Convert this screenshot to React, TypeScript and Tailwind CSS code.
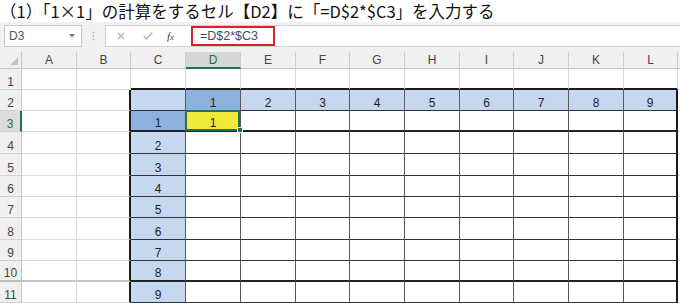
import React from "react";

const colW = [22, 55, 54, 55, 55, 55, 54, 55, 55, 54, 55, 55, 54, 2];
const letters = ["", "A", "B", "C", "D", "E", "F", "G", "H", "I", "J", "K", "L", ""];
const rowsN = [1, 2, 3, 4, 5, 6, 7, 8, 9, 10, 11];

function Cell({ r, c }: { r: number; c: number }) {
  // c: 0 row header, 1..12 A..L, 13 filler
  if (c === 0) {
    const sel = r === 3;
    const bottom = r === 10 ? "border-b-2 border-b-[#bdbdbd]" : "border-b border-b-[#d0d0d0]";
    return (
      <div
        className={`flex items-end justify-center pb-[1px] text-[12px] leading-none ${bottom} ${
          sel
            ? "bg-[#dcdcdc] border-r-2 border-r-[#217346] text-[#2a6a45]"
            : "bg-[#f0f0f0] border-r border-r-[#c6c6c6] text-[#444]"
        }`}
        style={{ fontFamily: "'Liberation Sans', Arial, sans-serif" }}
      >
        {r}
      </div>
    );
  }
  if (c === 13) {
    return <div className="bg-white border-b border-b-[#d9d9d9]" />;
  }
  const inTable = c >= 3 && c <= 12 && r >= 2;
  let right = "border-r border-r-[#dadada]";
  if (r >= 2 && (c === 2 || c === 12)) right = "border-r-2 border-r-[#1a1a1a]";
  else if (inTable) right = "border-r border-r-[#5a5a5a]";
  let bottom = "border-b border-b-[#dadada]";
  if (r === 1 && c >= 3) bottom = "border-b-2 border-b-[#1a1a1a]";
  else if (inTable && (r === 3 || r === 10)) bottom = "border-b-2 border-b-[#222]";
  else if (r === 10) bottom = "border-b-2 border-b-[#c4c4c4]";
  else if (inTable) bottom = "border-b border-b-[#333]";

  let bg = "bg-white";
  let text = "";
  if (inTable) {
    if (r === 2) {
      bg = c === 4 ? "bg-[#8eb0dc]" : "bg-[#c5d8f0]";
      if (c >= 4) text = String(c - 3);
    } else if (c === 3) {
      bg = r === 3 ? "bg-[#8eb0dc]" : "bg-[#c5d8f0]";
      text = String(r - 2);
    } else if (c === 4 && r === 3) {
      bg = "bg-[#efea3a]";
      text = "1";
    }
  }
  const isSel = c === 4 && r === 3;
  return (
    <div
      className={`relative flex items-end justify-center pb-[1px] text-[12px] leading-none text-[#1e1e1e] ${bg} ${right} ${bottom}`}
      style={{ fontFamily: "'Liberation Sans', Arial, sans-serif" }}
    >
      {text}
      {isSel && (
        <>
          <div className="absolute -left-[1px] -top-[1px] -right-[0px] -bottom-[1px] z-10 border-2 border-[#217346]" />
          <div className="absolute -right-[3px] -bottom-[3px] z-20 w-[6px] h-[6px] bg-[#217346] border border-white" />
        </>
      )}
    </div>
  );
}

export default function App() {
  return (
    <div className="w-[680px] h-[303px] overflow-hidden bg-white">
      {/* title */}
      <div
        className="h-[22px] text-[16.5px] leading-[22px] text-[#111] whitespace-nowrap"
        style={{ fontFamily: "'Noto Sans CJK JP', 'Noto Sans', sans-serif" }}
      >
        （1）「1×1」の計算をするセル【D2】に「=D$2*$C3」を入力する
      </div>
      {/* formula bar */}
      <div
        className="h-[30px] bg-[#f1f1f1] flex items-start pt-[3px] text-[12px]"
        style={{ fontFamily: "'Liberation Sans', Arial, sans-serif" }}
      >
        <div className="ml-[4px] w-[78px] h-[22px] bg-white border border-[#c8c8c8] flex items-center justify-between pl-[4px] pr-[6px] text-[#555]">
          <span>D3</span>
          <svg width="6" height="4" viewBox="0 0 6 4">
            <path d="M0 0 L6 0 L3 3.5 Z" fill="#777" />
          </svg>
        </div>
        <div className="w-[23px] h-[22px] flex items-center justify-center">
          <svg width="3" height="10" viewBox="0 0 3 10">
            <circle cx="1.5" cy="1.5" r="0.9" fill="#b8b8b8" />
            <circle cx="1.5" cy="5" r="0.9" fill="#b8b8b8" />
            <circle cx="1.5" cy="8.5" r="0.9" fill="#b8b8b8" />
          </svg>
        </div>
        <div className="flex-1 h-[22px] bg-white border border-[#d0d0d0] border-r-0 flex items-center">
          <div className="w-[82px] flex items-center">
            <svg className="ml-[11px]" width="8" height="8" viewBox="0 0 8 8">
              <path d="M1 1 L7 7 M7 1 L1 7" stroke="#b0b0b0" strokeWidth="1.1" />
            </svg>
            <svg className="ml-[18px]" width="10" height="8" viewBox="0 0 10 8">
              <path d="M0.8 4.2 L3.6 7 L9.2 0.8" stroke="#b0b0b0" strokeWidth="1.3" fill="none" />
            </svg>
            <span
              className="ml-[14px] text-[11px] italic text-[#444]"
              style={{ fontFamily: "'Liberation Serif', serif" }}
            >
              f<span className="text-[9px]">x</span>
            </span>
          </div>
          <div className="ml-[3px] w-[84px] h-[20px] border-2 border-[#d9222d] flex items-center pl-[7px] text-[12.5px] text-[#3f4b68]">
            =D$2*$C3
          </div>
        </div>
      </div>
      {/* sheet */}
      <div
        className="grid grid-cols-[22px_55px_54px_55px_55px_55px_54px_55px_55px_54px_55px_55px_54px_2px] grid-rows-[17px_21px_21px_21px_22px_22px_21px_21px_22px_21px_21px_21px]"
      >
        {letters.map((l, c) => {
          if (c === 0) {
            return (
              <div key={c} className="relative bg-[#f0f0f0] border-r border-r-[#c6c6c6] border-b border-b-[#c6c6c6]">
                <svg className="absolute right-[3px] bottom-[3px]" width="8" height="8" viewBox="0 0 8 8">
                  <path d="M8 0 L8 8 L0 8 Z" fill="#c4c4c4" />
                </svg>
              </div>
            );
          }
          const sel = c === 4;
          return (
            <div
              key={c}
              className={`flex items-center justify-center text-[12px] leading-none ${
                sel
                  ? "bg-[#d6d6d6] border-b-2 border-b-[#217346] text-[#2a6a45]"
                  : "bg-[#f0f0f0] border-b border-b-[#c6c6c6] text-[#444]"
              } ${c === 13 ? "" : "border-r border-r-[#cdcdcd]"}`}
              style={{ fontFamily: "'Liberation Sans', Arial, sans-serif" }}
            >
              {l}
            </div>
          );
        })}
        {rowsN.map((r) =>
          colW.map((_, c) => <Cell key={`${r}-${c}`} r={r} c={c} />)
        )}
      </div>
    </div>
  );
}
